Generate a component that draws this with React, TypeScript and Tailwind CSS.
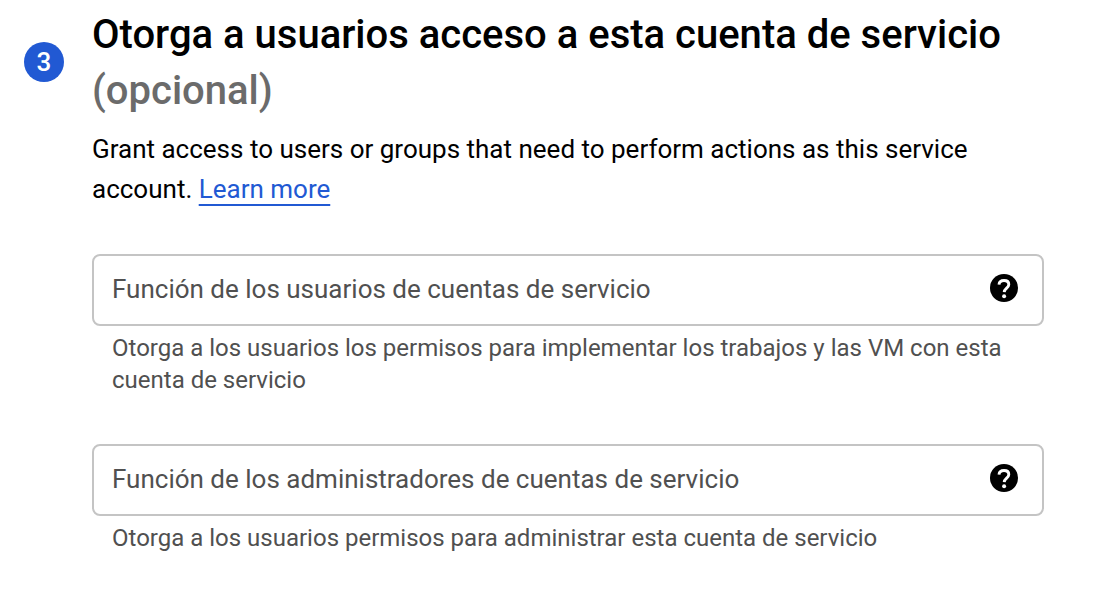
import { useId } from "react";

type FieldProps = { label: string; hint: string };

function HelpIcon() {
  return (
    <svg viewBox="0 0 28 28" className="size-7" fill="none" aria-hidden="true">
      <circle cx="14" cy="14" r="14" fill="currentColor" />
      <path
        d="M9 10.7C9.2 8 11.2 6.5 14 6.5c2.9 0 4.8 1.6 4.8 4 0 3.4-4.4 3.9-4.6 7.7"
        stroke="white"
        strokeWidth="2.9"
      />
      <circle cx="14.1" cy="22.2" r="2" fill="white" />
    </svg>
  );
}

function Field({ label, hint }: FieldProps) {
  const id = useId();
  return (
    <div>
      <div className="flex h-[72px] items-center rounded-lg border-2 border-[#c4c4c4] pr-6 pl-[18px]">
        <input
          id={id}
          type="text"
          aria-label={label}
          aria-describedby={`${id}-hint`}
          placeholder={label}
          className="min-w-0 flex-1 bg-transparent pb-0.5 text-[26px] text-black outline-none placeholder:text-[#505050]"
        />
        <button type="button" aria-label="Ayuda" className="shrink-0 pb-1 text-black">
          <HelpIcon />
        </button>
      </div>
      <p id={`${id}-hint`} className="px-5 pt-1.5 text-2xl leading-8 text-[#505050]">
        {hint}
      </p>
    </div>
  );
}

export default function App() {
  return (
    <main className="flex min-h-screen items-start gap-7 bg-white pt-[7px] pr-[76px] pl-6 font-[Roboto,sans-serif] text-black">
      <span className="mt-[35px] flex size-10 shrink-0 items-center justify-center rounded-full bg-[#2159d3] text-[26px] font-medium text-white">
        3
      </span>
      <section className="min-w-0 flex-1">
        <h1 className="text-[40px] leading-14 font-medium">
          Otorga a usuarios acceso a esta cuenta de servicio <span className="text-[#6b6b6b]">(opcional)</span>
        </h1>
        <p className="pt-2.5 text-[26px] leading-10">
          Grant access to users or groups that need to perform actions as this service account.{" "}
          <a href="#learn" className="text-[#2159d3] underline decoration-2 underline-offset-6">Learn more</a>
        </p>
        <form className="flex flex-col gap-12 pt-[45px]">
          <Field
            label="Función de los usuarios de cuentas de servicio"
            hint="Otorga a los usuarios los permisos para implementar los trabajos y las VM con esta cuenta de servicio"
          />
          <Field
            label="Función de los administradores de cuentas de servicio"
            hint="Otorga a los usuarios permisos para administrar esta cuenta de servicio"
          />
        </form>
      </section>
    </main>
  );
}
